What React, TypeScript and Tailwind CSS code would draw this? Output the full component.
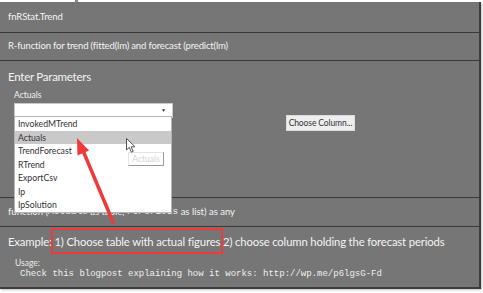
import React from "react";

const items = ["InvokedMTrend", "Actuals", "TrendForecast", "RTrend", "ExportCsv", "Ip", "IpSolution"];

export default function App() {
  return (
    <div
      className="relative h-[293px] w-[483px] overflow-hidden bg-white text-[#f3f3f3]"
      style={{ fontFamily: "Lato, 'Noto Sans', sans-serif" }}
    >
      {/* top strip */}
      <div className="flex h-[2px]">
        <div className="w-[75px] bg-white" />
        <div className="w-[3px] bg-[#8a8a8a]" />
        <div className="flex-1 bg-white" />
      </div>

      <div className="flex h-[287px] w-[481px] flex-col border-r-2 border-b-2 border-[#3c3c3c] bg-[#767676] shadow-[1px_1px_2px_rgba(0,0,0,0.25)]">
        <div className="flex h-[31px] items-center whitespace-nowrap border-b-[1.5px] border-[#3a3a3a] pl-[8px] text-[9.5px] tracking-[-0.1px]">
          fnRStat.Trend
        </div>
        <div className="flex h-[28px] items-center whitespace-nowrap border-b-[1.5px] border-[#3a3a3a] pl-[8px] text-[9.5px] tracking-[-0.15px]">
          R-function for trend (fitted(lm) and forecast (predict(lm)
        </div>

        <div className="h-[137px] border-b-[1.5px] border-[#3a3a3a] pl-[8px] pt-[7px]">
          <div className="text-[11.5px] leading-[17px] tracking-[-0.25px]">Enter Parameters</div>
          <div className="flex">
            <div className="flex w-[165px] flex-col pl-[6px]">
              <div className="mt-[5px] text-[8.5px] leading-[11px]">Actuals</div>
              <div className="mt-[2px] flex h-[15px] items-center justify-end border border-[#c9c9c9] bg-white pr-[6px]">
                <span className="text-[5px] leading-none text-[#333]">▼</span>
              </div>
            </div>
            <div className="ml-[113px] mt-[30px]">
              <div className="flex h-[16px] w-[69px] items-center justify-center whitespace-nowrap border border-[#dcdcdc] bg-[#eeeeee] text-[8.5px] tracking-[-0.1px] text-[#333]">
                Choose Column...
              </div>
            </div>
          </div>
        </div>

        <div className="flex h-[29px] items-center whitespace-nowrap border-b-[1.5px] border-[#3a3a3a] pl-[8px] text-[9.5px]">
          function (<span style={{ fontFamily: "'Liberation Mono', monospace" }}>Actuals</span>&nbsp;as table,&nbsp;
          <span style={{ fontFamily: "'Liberation Mono', monospace" }}>FcPeriods</span>&nbsp;as list) as any
        </div>

        <div className="flex-1 pl-[8px] pt-[6px]">
          <div className="whitespace-nowrap text-[11.3px] leading-[17px] tracking-[-0.15px]">
            Example:{" "}
            <span className="relative">
              1) Choose table with actual figures
              <span className="absolute -top-[7px] -bottom-[6px] -left-[3px] -right-[3px] border-2 border-[#ee3a3a]" />
            </span>{" "}
            2) choose column holding the forecast periods
          </div>
          <div className="mt-[8px] pl-[7px] text-[8.5px] leading-[11px] text-[#ececec]">Usage:</div>
          <div
            className="whitespace-nowrap pl-[12px] text-[9px] leading-[11px] text-[#efefef]"
            style={{ fontFamily: "'Liberation Mono', monospace" }}
          >
            Check this blogpost explaining how it works: http://wp.me/p6lgsG-Fd
          </div>
        </div>
      </div>

      {/* dropdown list */}
      <div className="absolute left-[14px] top-[116px] w-[158px] border border-[#b5b5b5] bg-white text-[8.7px] text-[#333]">
        {items.map((it) => (
          <div
            key={it}
            className={`flex h-[13.5px] items-center pl-[3px] ${it === "Actuals" ? "bg-[#c9c9c9]" : ""}`}
          >
            {it}
          </div>
        ))}
      </div>

      {/* drag ghost */}
      <div className="absolute left-[128px] top-[152px] flex h-[14px] w-[36px] items-center justify-center border border-[#e4e4e4] border-r-[#9a9a9a] border-b-[#9a9a9a] bg-white text-[8.5px] text-[#d4d4d4]">
        Actuals
      </div>

      {/* cursor */}
      <svg className="absolute left-[126px] top-[138px]" width="11" height="16" viewBox="0 0 11 16">
        <path d="M0.5 0.5 L0.5 12 L3.3 9.4 L5.4 14.2 L7.2 13.4 L5.2 8.8 L9 8.8 Z" fill="white" stroke="#555" strokeWidth="1" />
      </svg>

      {/* red arrow */}
      <svg className="absolute left-0 top-0" width="483" height="293" viewBox="0 0 483 293">
        <line x1="113" y1="222" x2="84" y2="153" stroke="#ee3a3a" strokeWidth="3.5" strokeLinecap="round" />
        <polygon points="77,138 89,150.5 77.5,155.5" fill="#ee3a3a" />
      </svg>
    </div>
  );
}
